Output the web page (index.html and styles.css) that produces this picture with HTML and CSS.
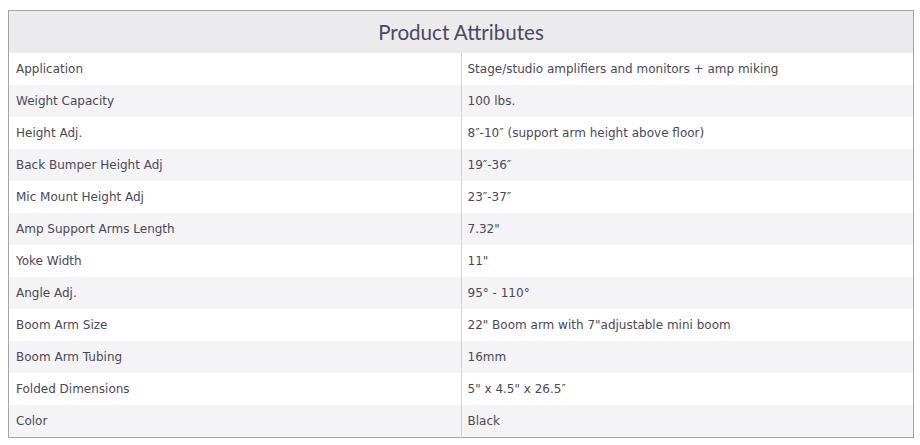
FILE: index.html
```html
<!DOCTYPE html>
<html>
<head>
<meta charset="utf-8">
<link rel="stylesheet" href="styles.css">
</head>
<body>
<table class="attrs">
  <thead>
    <tr><th colspan="2" class="title">Product Attributes</th></tr>
  </thead>
  <tbody>
    <tr><td class="k">Application</td><td class="v">Stage/studio amplifiers and monitors + amp miking</td></tr>
    <tr><td class="k">Weight Capacity</td><td class="v">100 lbs.</td></tr>
    <tr><td class="k">Height Adj.</td><td class="v">8″-10″ (support arm height above floor)</td></tr>
    <tr><td class="k">Back Bumper Height Adj</td><td class="v">19″-36″</td></tr>
    <tr><td class="k">Mic Mount Height Adj</td><td class="v">23″-37″</td></tr>
    <tr><td class="k">Amp Support Arms Length</td><td class="v">7.32"</td></tr>
    <tr><td class="k">Yoke Width</td><td class="v">11"</td></tr>
    <tr><td class="k">Angle Adj.</td><td class="v">95° - 110°</td></tr>
    <tr><td class="k">Boom Arm Size</td><td class="v">22" Boom arm with 7"adjustable mini boom</td></tr>
    <tr><td class="k">Boom Arm Tubing</td><td class="v">16mm</td></tr>
    <tr><td class="k">Folded Dimensions</td><td class="v">5" x 4.5" x 26.5″</td></tr>
    <tr><td class="k">Color</td><td class="v">Black</td></tr>
  </tbody>
</table>
</body>
</html>
```

FILE: styles.css
```css
html, body {
  margin: 0;
  padding: 0;
  background: #ffffff;
}
body {
  padding: 10px 0 0 8px;
  font-family: "DejaVu Sans", Verdana, sans-serif;
}
.attrs {
  width: 906px;
  border-collapse: collapse;
  border: 1px solid #a3a3ab;
  table-layout: fixed;
}
.title {
  height: 42px;
  padding: 0;
  background: #ebebee;
  font-family: Lato, "Open Sans", sans-serif;
  font-weight: 400;
  font-size: 20.6px;
  color: #4c4860;
  text-align: center;
  vertical-align: middle;
}
.attrs td {
  height: 32px;
  padding: 0 0 0 7px;
  font-size: 12px;
  color: #4b4757;
  vertical-align: middle;
  white-space: nowrap;
}
.attrs td.k {
  width: 446px;
}
.attrs td.v {
  border-left: 1px solid #d2d2d8;
  padding-left: 6px;
}
.attrs tbody tr:nth-child(odd) td {
  background: #ffffff;
}
.attrs tbody tr:nth-child(even) td {
  background: #f4f4f6;
}
```
